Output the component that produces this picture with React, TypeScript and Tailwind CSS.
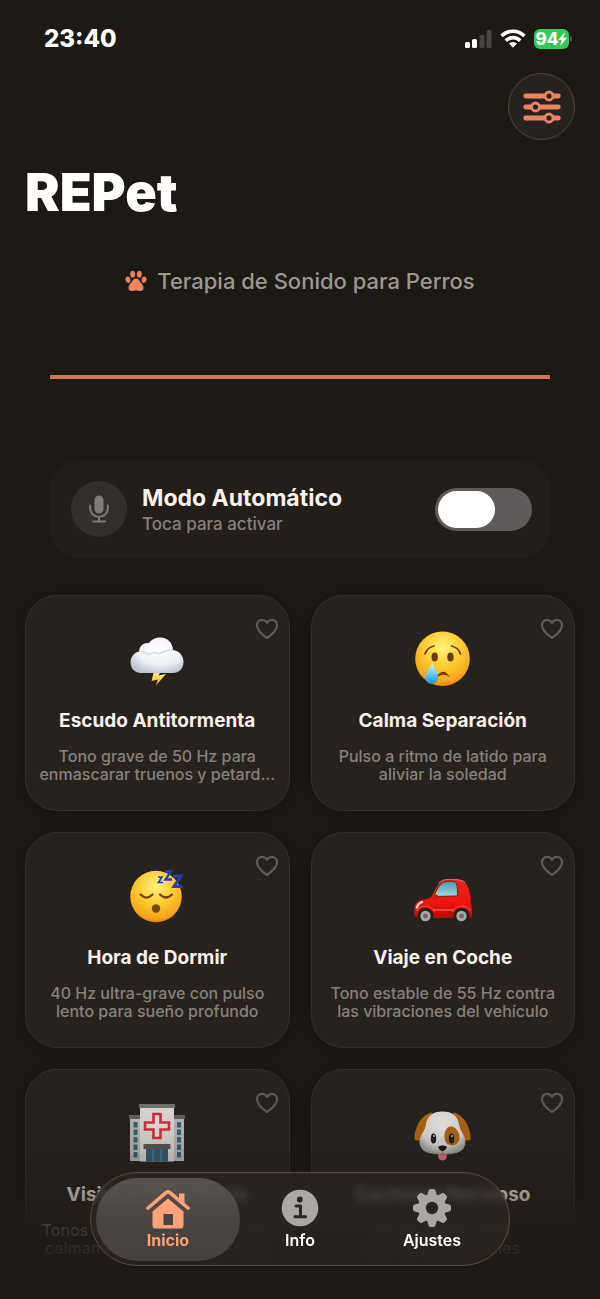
import React from "react";

function Storm() {
  return (
    <svg viewBox="0 0 58 58" className="size-[58px]" aria-hidden="true">
      <defs>
        <radialGradient id="cloud" cx="0.55" cy="0.35" r="0.7">
          <stop offset="0" stopColor="#ffffff" />
          <stop offset="0.6" stopColor="#eef0f5" />
          <stop offset="1" stopColor="#b9c2d0" />
        </radialGradient>
        <linearGradient id="bolt" x1="0" y1="0" x2="0" y2="1">
          <stop offset="0" stopColor="#fff0a0" />
          <stop offset="0.5" stopColor="#fbd64a" />
          <stop offset="1" stopColor="#e0a010" />
        </linearGradient>
      </defs>
      <path d="M26 41h7l-2.500 4.500L38 44L27.500 56L30 49.500L23.500 51z" fill="url(#bolt)" />
      <path d="M13.500 43C7 43 2.500 38.500 2.500 32.500S6.500 22.500 11 21.500C11.500 16 15.500 12.500 21 13C24 9 28 7.500 32.500 7.500C39.500 7.500 44.500 12.500 45 20C51 20.500 55.500 25.500 55.500 32C55.500 38.500 51 43 45 43z" fill="url(#cloud)" />
      <path d="M11 21.500c4-.3 7 .8 9.500 3.200c3-2.200 8-2.700 11-.7c3-2.500 9-4 13.500-4" fill="none" stroke="#c5ccda" strokeWidth="1.300" opacity="0.7" />
    </svg>
  );
}

function FaceFill() {
  return (
    <defs>
      <radialGradient id="face" cx="0.5" cy="0.3" r="0.72">
        <stop offset="0" stopColor="#fff27a" />
        <stop offset="0.5" stopColor="#fdc930" />
        <stop offset="0.85" stopColor="#f7a61b" />
        <stop offset="1" stopColor="#dc7d10" />
      </radialGradient>
      <linearGradient id="tear" x1="0" y1="0" x2="0" y2="1">
        <stop offset="0" stopColor="#d4f4ff" />
        <stop offset="0.5" stopColor="#6ccdf8" />
        <stop offset="1" stopColor="#1893e8" />
      </linearGradient>
    </defs>
  );
}

function Crying() {
  return (
    <svg viewBox="0 0 58 58" className="size-[58px]" aria-hidden="true">
      <FaceFill />
      <circle cx="28.500" cy="28.700" r="27.300" fill="url(#face)" />
      <g fill="none" stroke="#70410c" strokeWidth="1.700" strokeLinecap="round">
        <path d="M11 24q2-6.500 9-8" />
        <path d="M37.500 16q7 1.500 9 8" />
      </g>
      <ellipse cx="20.700" cy="27" rx="3.200" ry="4.500" fill="#6b3c09" />
      <ellipse cx="36.500" cy="27" rx="3.200" ry="4.500" fill="#6b3c09" />
      <path d="M22 48q6.500-12 14-1q-7-5-14 1" fill="#70410c" />
      <path d="M18 33C20.500 39 24 42.500 24 47.500a6.300 6.300 0 0 1-12.600 0C11.400 42.500 15.500 39 18 33z" fill="url(#tear)" />
    </svg>
  );
}

function Sleeping() {
  return (
    <svg viewBox="0 0 58 58" className="size-[58px]" aria-hidden="true">
      <FaceFill />
      <circle cx="28" cy="29.500" r="25.700" fill="url(#face)" />
      <g fill="none" stroke="#70410c" strokeWidth="2.200" strokeLinecap="round">
        <path d="M12.500 27.500q6 6 12 0" />
        <path d="M32 27.500q6 6 12 0" />
      </g>
      <circle cx="28" cy="41.500" r="4.200" fill="#7a460c" />
      <g fill="none" stroke="#2440b4" strokeWidth="2.300">
        <path d="M30 10h4l-3.500 5.500h4.500" strokeWidth="1.700" />
        <path d="M37 4.500h6l-5.500 8h6.500" />
        <path d="M45 9h8L46 19.500h8.500" strokeWidth="3" />
      </g>
    </svg>
  );
}

function Car() {
  return (
    <svg viewBox="0 0 60 58" className="h-[58px] w-[60px]" aria-hidden="true">
      <defs>
        <linearGradient id="body" x1="0" y1="0" x2="0" y2="1">
          <stop offset="0" stopColor="#e6281f" />
          <stop offset="0.6" stopColor="#f2150f" />
          <stop offset="1" stopColor="#b00b08" />
        </linearGradient>
        <linearGradient id="glass" x1="0" y1="0" x2="0" y2="1">
          <stop offset="0" stopColor="#4e9dac" />
          <stop offset="1" stopColor="#9bd6df" />
        </linearGradient>
      </defs>
      <path d="M1.500 49.500C.7 43 1 36.500 6 34C10 32 15 32.500 18.500 30C21 25 22.500 20.500 26.500 16C29 13 33 12.300 39 12.300C46 12.300 51 13 53.500 17C56.500 22 57.500 29 58 37C59.500 41 59.700 46 58.500 51H6z" fill="url(#body)" />
      <path d="M21 29.500C22.500 25 24.500 20.500 28 17C30 15 33 14.300 38 14.300C42 14.300 43.500 15.500 44 18.500C44.700 22 44.500 26 44.300 29z" fill="url(#glass)" stroke="#6c1512" strokeWidth="0.900" />
      <path d="M25.500 16.500Q29 12.200 36 12.400Q47 12 52 15" fill="none" stroke="#b98780" strokeWidth="0.900" />
      <path d="M20 43h20" stroke="#ff877b" strokeWidth="0.900" />
      <path d="M3.800 40.500q1.200-4 5.200-5.500" stroke="#ffd6d0" strokeWidth="2.300" fill="none" strokeLinecap="round" />
      <path d="M3.500 44q3-5 9-5t9 6M39.500 45q3-6 9-6t9 5" fill="none" stroke="#ff5b4f" strokeWidth="1" />
      <rect x="20" y="27.500" width="5" height="5" rx="2" fill="#d7140e" />
      {[12.5, 48.5].map((x) => (
        <g key={x}>
          <circle cx={x} cy="49" r="8" fill="#24201f" />
          <circle cx={x} cy="49" r="5.200" fill="#a8a8a8" />
          <circle cx={x} cy="49" r="2.400" fill="#6b6b6b" />
        </g>
      ))}
    </svg>
  );
}

function Hospital() {
  return (
    <svg viewBox="0 0 58 58" className="size-[58px]" aria-hidden="true">
      <rect x="2" y="13" width="54" height="44" fill="#c3c1ba" />
      <path d="M1 11h56v4H1z" fill="#66635f" />
      <rect x="12" y="2" width="34" height="55.500" fill="#e4e2e0" />
      <path d="M11 0h36v4H11z" fill="#77736f" />
      <g fill="#356782">
        {[18, 25.5, 33, 40.5, 48].map((y) => (
          <React.Fragment key={y}>
            <rect x="5.500" y={y} width="4" height="5.500" />
            <rect x="49" y={y} width="4" height="5.500" />
          </React.Fragment>
        ))}
      </g>
      <path d="M25.500 10h7v8.500h8.500v7h-8.500v8.500h-7v-8.500H17v-7h8.500z" fill="#f3e6e6" stroke="#d9303c" strokeWidth="2.600" />
      <rect x="15.500" y="40" width="27" height="5" fill="#5d5957" />
      <rect x="18" y="45" width="22" height="12.500" fill="#36617c" />
      <path d="M25 45v12.500M33 45v12.500" stroke="#7f9aa8" strokeWidth="0.900" />
    </svg>
  );
}

function Dog() {
  return (
    <svg viewBox="0 0 58 58" className="size-[58px]" aria-hidden="true">
      <defs>
        <radialGradient id="fur" cx="0.5" cy="0.35" r="0.65">
          <stop offset="0" stopColor="#f7f5f3" />
          <stop offset="0.7" stopColor="#e2e0df" />
          <stop offset="1" stopColor="#a9a5a2" />
        </radialGradient>
      </defs>
      <path d="M18 8.500C9 9.500 0 22 .5 35.500c3 2.500 8 1 13.500-7.500z" fill="#b56a12" />
      <path d="M39 8.500c9 1 18 13.500 17.500 27c-3 2.500-8 1-13.500-7.500z" fill="#b56a12" />
      <path d="M28.500 7.500C38 7.500 44 12 45 20.500C45.700 27 51.500 31 51.500 38C51.500 47 43 50.500 28.500 50.500S5.500 47 5.500 38C5.500 31 11.300 27 12 20.500C13 12 19 7.500 28.500 7.500z" fill="url(#fur)" />
      <path d="M36 22.500c6-1 10.500 7.500 9.500 12.500c-1 6-8 8-12 5c-5-4-3.500-16.500 2.500-17.500z" fill="#b56a12" />
      <ellipse cx="19.500" cy="34.500" rx="2.700" ry="5" fill="#211c1a" />
      <ellipse cx="37.500" cy="34.500" rx="2.700" ry="5" fill="#211c1a" />
      <circle cx="20" cy="32" r="0.900" fill="#ddd" />
      <circle cx="38" cy="32" r="0.900" fill="#ddd" />
      <path d="M24.500 42.500q4-2 8 0q1 1-1 3l-3 2l-3-2q-2-2-1-3z" fill="#191514" />
      <path d="M24.300 50h8.400v3q-.8 3.500-4.200 3.500t-4.200-3.500z" fill="#e57686" />
      <path d="M28.500 47v3M21.500 49.500q4 2 7 0q3 2 7 0" stroke="#777170" strokeWidth="0.800" fill="none" />
    </svg>
  );
}

function Heart() {
  return (
    <svg viewBox="0 0 24 22" className="h-[22px] w-6" aria-hidden="true">
      <path d="M12 20C7 16.500 2 12 2 7.200C2 4 4.300 1.800 7.200 1.800C9.400 1.800 11 3 12 4.800C13 3 14.600 1.800 16.800 1.800C19.700 1.800 22 4 22 7.200C22 12 17 16.500 12 20z" fill="none" stroke="#625d59" strokeWidth="2.200" strokeLinejoin="round" />
    </svg>
  );
}

function Paw() {
  return (
    <svg viewBox="0 0 22 22" className="size-[22px]" fill="#ec8460" aria-hidden="true">
      <ellipse cx="7.700" cy="4.200" rx="2.400" ry="3.500" />
      <ellipse cx="14.300" cy="4.200" rx="2.400" ry="3.500" />
      <ellipse cx="3" cy="9.800" rx="2.400" ry="3.300" transform="rotate(-12 3 9.800)" />
      <ellipse cx="19" cy="9.800" rx="2.400" ry="3.300" transform="rotate(12 19 9.800)" />
      <path d="M11 8.500c2.500 0 3.300 2 4.500 3.700c1.400 1.800 3 3 3 5.200c0 2.300-1.400 3.600-3.300 3.600c-1.600 0-2.500-.5-4.200-.5s-2.600 .5-4.200 .5c-1.900 0-3.300-1.300-3.300-3.600c0-2.200 1.600-3.400 3-5.200C7.700 10.500 8.500 8.500 11 8.500z" />
    </svg>
  );
}

function Sliders() {
  return (
    <svg viewBox="0 0 38 34" className="h-[34px] w-[38px]" aria-hidden="true">
      <path d="M2.700 6h32.600M2.700 17h32.600M2.700 28h32.600" stroke="#ec8460" strokeWidth="4.800" strokeLinecap="round" />
      <g fill="#28221e" stroke="#ec8460" strokeWidth="2.800">
        <circle cx="26" cy="6" r="4" />
        <circle cx="12.500" cy="17" r="4" />
        <circle cx="26" cy="28" r="4" />
      </g>
    </svg>
  );
}

function Mic() {
  return (
    <svg viewBox="0 0 20 28" className="h-7 w-5" aria-hidden="true">
      <rect x="5.500" y="0.500" width="9" height="18" rx="4.500" fill="#807b77" />
      <path d="M1.200 10.500v3.300a8.800 8.200 0 0 0 17.600 0v-3.300M10 22v4M4 26.500h12" fill="none" stroke="#807b77" strokeWidth="2" strokeLinecap="round" />
    </svg>
  );
}

function HomeIcon() {
  return (
    <svg viewBox="0 0 44 40" className="h-10 w-11" fill="#ffa17b" aria-hidden="true">
      <path d="M22 7.500L6.500 21v14.500q0 3 3 3h25q3 0 3-3V21zM17.500 24h9.500v11h-9.500z" fillRule="evenodd" />
      <path d="M33 3.500h5.500v12l-5.500-4.700z" />
      <path d="M5.500 21L22 6.800l16.500 14.200" fill="none" stroke="#504b47" strokeWidth="2.200" />
      <path d="M2 18L20 2.700q2-1.700 4 0L42 18" fill="none" stroke="#ffa17b" strokeWidth="3.600" strokeLinecap="round" strokeLinejoin="round" />
    </svg>
  );
}

function InfoIcon() {
  return (
    <svg viewBox="0 0 38 38" className="h-10 w-[38px]" aria-hidden="true">
      <circle cx="19" cy="19" r="18.300" fill="#aaa7a5" />
      <circle cx="18.800" cy="10.500" r="2.900" fill="#2b2521" />
      <path d="M15 17h4.500v10.500M14 27.700h10.500" fill="none" stroke="#2b2521" strokeWidth="3" strokeLinecap="round" strokeLinejoin="round" />
    </svg>
  );
}

function GearIcon() {
  return (
    <svg viewBox="0 0 38 38" className="h-10 w-[38px]" aria-hidden="true">
      <g fill="#aaa7a5">
        {[0, 45, 90, 135].map((a) => (
          <path key={a} transform={`rotate(${a} 19 19)`} d="M14 7L15.500 1.500Q16 0 17.500 0h3Q22 0 22.500 1.500L24 7v24l-1.500 5.500Q22 38 20.500 38h-3Q16 38 15.500 36.500L14 31z" />
        ))}
        <circle cx="19" cy="19" r="14" />
      </g>
      <circle cx="19" cy="19" r="6.200" fill="#2b2521" />
    </svg>
  );
}

function StatusBar() {
  return (
    <div className="flex h-[73px] items-center justify-between pt-1 pr-7 pl-11">
      <time className="text-[24px] leading-7 font-extrabold text-white">23:40</time>
      <div className="flex items-center gap-2">
        <svg viewBox="0 0 27 18" className="h-[18px] w-[27px]" aria-label="Cobertura">
          <rect x="0" y="12" width="5" height="6" rx="1.500" fill="#fff" />
          <rect x="7" y="9" width="5" height="9" rx="1.500" fill="#fff" />
          <rect x="14.500" y="5" width="5" height="13" rx="1.500" fill="#484542" />
          <rect x="21.500" y="0" width="5" height="18" rx="1.500" fill="#484542" />
        </svg>
        <svg viewBox="0 0 26 19" className="h-[19px] w-[26px]" aria-label="Wi-Fi">
          <g fill="none" stroke="#fff" strokeWidth="3.700">
            <path d="M1.600 7a16 16 0 0 1 22.800 0" />
            <path d="M5.800 11.700a10.200 10.200 0 0 1 14.400 0" />
          </g>
          <path d="M13 18.700l-4-4.200a5.800 5.800 0 0 1 8 0z" fill="#fff" />
        </svg>
        <div className="flex items-center gap-px">
          <div className="flex h-5 w-[35px] items-center justify-center rounded-md bg-[#34c759] text-white">
            <span className="text-[17px] leading-5 font-extrabold">94</span>
            <svg viewBox="0 0 9 14" className="h-3.5 w-[9px]" fill="#fff" aria-hidden="true">
              <path d="M7 0L0 8h3.700L2 14L9 5.700H5.200z" />
            </svg>
          </div>
          <span className="h-1.5 w-0.5 rounded-r-full bg-[#55524f]" />
        </div>
      </div>
    </div>
  );
}

type Mode = { title: string; description: string; Icon: () => React.ReactNode };

const modes: Mode[] = [
  { title: "Escudo Antitormenta", description: "Tono grave de 50 Hz para enmascarar truenos y petard…", Icon: Storm },
  { title: "Calma Separación", description: "Pulso a ritmo de latido para aliviar la soledad", Icon: Crying },
  { title: "Hora de Dormir", description: "40 Hz ultra-grave con pulso lento para sueño profundo", Icon: Sleeping },
  { title: "Viaje en Coche", description: "Tono estable de 55 Hz contra las vibraciones del vehículo", Icon: Car },
  { title: "Visita al Veterinario", description: "Tonos graves con suave pulso calmante para visitas clínicas", Icon: Hospital },
  { title: "Cachorro Nervioso", description: "42 Hz suave para\ncachorros y jóvenes", Icon: Dog },
];

function ModeCard({ title, description, Icon }: Mode) {
  return (
    <article className="relative flex h-[216px] flex-col items-center rounded-[32px] border border-[#35302c] bg-[#28221e] px-3 pt-[34px] text-center shadow-[0_2px_14px_rgba(0,0,0,0.2)]">
      <button type="button" aria-label={`Añadir ${title} a favoritos`} className="absolute top-[22px] right-[10px]">
        <Heart />
      </button>
      <Icon />
      <h2 className="mt-[21px] text-[19px] leading-6 font-bold text-[#f8f1ea]">{title}</h2>
      <p className="mt-3.5 line-clamp-2 text-[16px] leading-[18px] font-medium whitespace-pre-line text-[#86817c]">{description}</p>
    </article>
  );
}

export default function App() {
  return (
    <div className="relative min-h-screen bg-[#1d1915] pb-[14px] font-['Inter','Liberation_Sans',sans-serif]">
      <StatusBar />
      <header className="px-[25px]">
        <div className="flex justify-end">
          <button type="button" aria-label="Filtros" className="flex size-[67px] items-center justify-center rounded-full border border-[#51463f] bg-[#28221e]">
            <Sliders />
          </button>
        </div>
        <h1 className="mt-[21px] text-[52px] leading-[64px] font-black text-white">REPet</h1>
        <p className="mt-10 flex items-center justify-center gap-2.5 text-[22px] leading-8 font-medium text-[#9b9791]">
          <Paw />
          Terapia de Sonido para Perros
        </p>
      </header>
      <main className="px-[25px]">
        <hr className="mx-[25px] mt-[78px] h-1 border-0 bg-[#cb775a]" />
        <section className="mx-[25px] mt-[81px] flex h-[98px] items-center rounded-[28px] bg-[#231e1a] pr-[18px] pl-[21px]">
          <span className="flex size-14 items-center justify-center rounded-full bg-[#332e2a]">
            <Mic />
          </span>
          <label htmlFor="auto" className="ml-[15px] flex-1 pt-0.5">
            <span className="block text-[23px] leading-7 font-bold text-[#f8f1ea]">Modo Automático</span>
            <span className="block text-[17px] leading-6 font-medium text-[#86817c]">Toca para activar</span>
          </label>
          <input id="auto" type="checkbox" role="switch" className="h-[43px] w-[97px] appearance-none rounded-full bg-[#5e5b5a] p-[3px] before:block before:h-[37px] before:w-[57px] before:rounded-full before:bg-white before:content-['']" />
        </section>
        <div className="mt-[37px] grid grid-cols-2 gap-[21px]">
          {modes.map((m) => (
            <ModeCard key={m.title} {...m} />
          ))}
        </div>
      </main>
      <div className="pointer-events-none absolute inset-x-0 bottom-0 h-[229px] bg-[linear-gradient(to_bottom,rgba(29,25,21,0)_0%,rgba(29,25,21,0.12)_28%,rgba(29,25,21,0.42)_54%,rgba(29,25,21,0.74)_70%,rgba(29,25,21,0.86)_80%,rgba(29,25,21,0.95)_100%)]" />
      <nav className="absolute bottom-[33px] left-1/2 flex h-[94px] w-[420px] -translate-x-1/2 items-center rounded-full border border-[#594b42] bg-[#2b2521]/75 p-[5px] text-[16px] leading-5 font-semibold text-white backdrop-blur-[3px]">
        <a href="#inicio" aria-current="page" className="flex h-[83px] w-36 flex-col items-center justify-center rounded-full bg-linear-to-b from-[#605b56]/85 via-[#4e4945]/90 to-[#484340]/95 pt-0.5 font-bold text-[#ffa17b]">
          <HomeIcon />
          <span>Inicio</span>
        </a>
        <a href="#info" className="flex flex-1 flex-col items-center gap-0.5">
          <InfoIcon />
          <span>Info</span>
        </a>
        <a href="#ajustes" className="flex w-36 flex-col items-center gap-0.5">
          <GearIcon />
          <span>Ajustes</span>
        </a>
      </nav>
    </div>
  );
}
